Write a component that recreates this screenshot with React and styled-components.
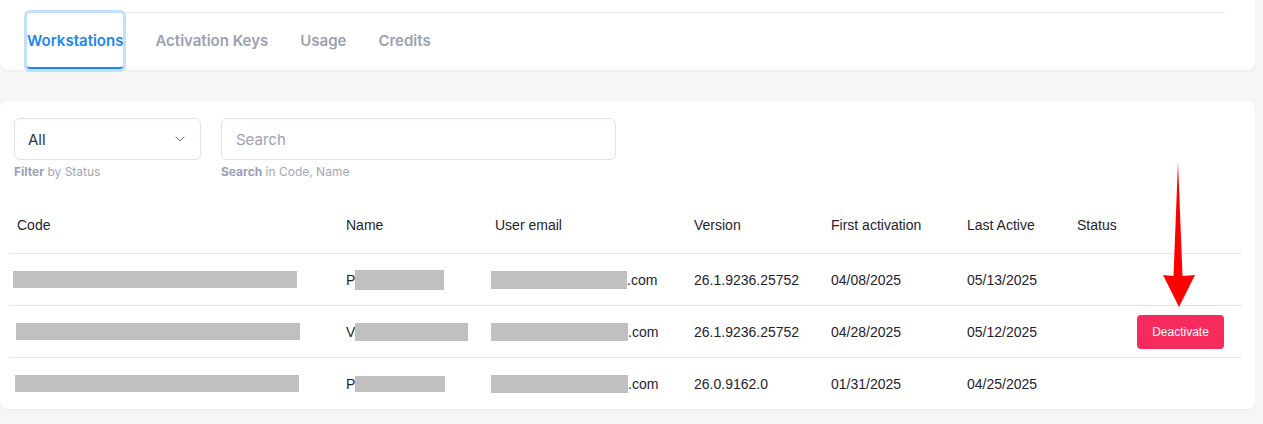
import React from "react";
import styled, { createGlobalStyle } from "styled-components";
import { ChevronDown } from "lucide-react";

const GlobalStyle = createGlobalStyle`
  body {
    margin: 0;
    background: #f6f6f7;
    font-family: Inter, "Liberation Sans", Arial, sans-serif;
  }
`;

const rows = [
  { code: [284, 17, 3], first: "P", name: [89, 20], email: [136, 18], version: "26.1.9236.25752", first_act: "04/08/2025", last: "05/13/2025" },
  { code: [284, 17, 6], first: "V", name: [113, 18], email: [137, 18], version: "26.1.9236.25752", first_act: "04/28/2025", last: "05/12/2025", action: true },
  { code: [284, 17, 5], first: "P", name: [90, 16], email: [137, 18], version: "26.0.9162.0", first_act: "01/31/2025", last: "04/25/2025" },
];

export default function App() {
  return (
    <Page>
      <GlobalStyle />
      <TopCard>
        <Divider />
        <Tabs>
          <Tab $active>Workstations</Tab>
          <Tab>Activation Keys</Tab>
          <Tab>Usage</Tab>
          <Tab>Credits</Tab>
        </Tabs>
      </TopCard>

      <MainCard>
        <Filters>
          <Field>
            <SelectBox $width={187}>
              <span>All</span>
              <ChevronDown size={16} strokeWidth={1.5} color="#6b7280" />
            </SelectBox>
            <Helper>
              <b>Filter</b> by Status
            </Helper>
          </Field>
          <Field>
            <SearchBox $width={395}>Search</SearchBox>
            <Helper>
              <b>Search</b> in Code, Name
            </Helper>
          </Field>
        </Filters>

        <Table>
          <colgroup>
            <col style={{ width: 329 }} />
            <col style={{ width: 149 }} />
            <col style={{ width: 199 }} />
            <col style={{ width: 137 }} />
            <col style={{ width: 136 }} />
            <col style={{ width: 110 }} />
            <col style={{ width: 60 }} />
            <col style={{ width: 112 }} />
          </colgroup>
          <thead>
            <tr>
              <Th>Code</Th>
              <Th>Name</Th>
              <Th>User email</Th>
              <Th>Version</Th>
              <Th>First activation</Th>
              <Th>Last Active</Th>
              <Th>Status</Th>
              <Th />
            </tr>
          </thead>
          <tbody>
            {rows.map((r, i) => (
              <Tr key={i}>
                <Td>
                  <Redact $w={r.code[0]} $h={r.code[1]} $dx={r.code[2] - 7} />
                </Td>
                <Td>
                  {r.first}
                  <Redact $w={r.name[0]} $h={r.name[1]} $dx={0} />
                </Td>
                <Td>
                  <Redact $w={r.email[0]} $h={r.email[1]} $dx={-4} />
                  .com
                </Td>
                <Td>{r.version}</Td>
                <Td>{r.first_act}</Td>
                <Td>{r.last}</Td>
                <Td />
                <Td>{r.action && <DangerButton>Deactivate</DangerButton>}</Td>
              </Tr>
            ))}
          </tbody>
        </Table>
      </MainCard>

      <Arrow width="36" height="150" viewBox="0 0 36 150">
        <path d="M18 2 L22.5 116 L35 115 L19 147 L3 115 L13.5 116 Z" fill="#ff0000" />
      </Arrow>
    </Page>
  );
}

const Page = styled.div`
  position: relative;
  width: 1255px;
  padding-bottom: 15px;
`;

const TopCard = styled.div`
  background: #fff;
  height: 70px;
  padding: 12px 30px 0 25px;
  box-sizing: border-box;
  border-radius: 0 0 8px 8px;
  box-shadow: 0 1px 3px rgba(0, 0, 0, 0.05);
`;

const Divider = styled.div`
  height: 1px;
  background: #ececef;
`;

const Tabs = styled.div`
  display: flex;
  gap: 32px;
  padding-left: 2px;
`;

const Tab = styled.div`
  height: 56px;
  padding: 0;
  box-sizing: border-box;
  display: flex;
  align-items: center;
  font-size: 15px;
  font-weight: 600;
  color: ${(p) => (p.$active ? "#1c86f2" : "#9ba1b5")};
  border-bottom: 2.5px solid ${(p) => (p.$active ? "#1c86f2" : "transparent")};
  border-radius: 3px;
  box-shadow: ${(p) => (p.$active ? "0 0 0 3px #c4defd" : "none")};
`;

const MainCard = styled.div`
  margin-top: 31px;
  background: #fff;
  border-radius: 8px;
  padding: 17px 13px 0 10px;
  box-shadow: 0 1px 3px rgba(0, 0, 0, 0.05);
`;

const Filters = styled.div`
  display: flex;
  gap: 20px;
  margin-left: 4px;
`;

const Field = styled.div`
  display: flex;
  flex-direction: column;
  gap: 4px;
`;

const SelectBox = styled.div`
  width: ${(p) => p.$width}px;
  height: 42px;
  box-sizing: border-box;
  border: 1px solid #e1e3ea;
  border-radius: 6px;
  display: flex;
  align-items: center;
  justify-content: space-between;
  padding: 0 12px 0 13px;
  font-size: 15px;
  color: #2f3542;
`;

const SearchBox = styled.div`
  width: ${(p) => p.$width}px;
  height: 42px;
  box-sizing: border-box;
  border: 1px solid #e1e3ea;
  border-radius: 6px;
  display: flex;
  align-items: center;
  padding: 0 14px;
  font-size: 15px;
  color: #9ca1b3;
`;

const Helper = styled.div`
  font-size: 12px;
  color: #a2a7b8;
  line-height: 15px;

  b {
    font-weight: 700;
    color: #9aa0b3;
  }
`;

const Table = styled.table`
  margin-top: 18px;
  width: 1232px;
  table-layout: fixed;
  border-collapse: collapse;
  font-family: "Liberation Sans", Arial, sans-serif;
  font-size: 14px;
  color: #1f2330;
`;

const Th = styled.th`
  height: 56px;
  padding: 0 0 0 7px;
  text-align: left;
  font-weight: 400;
  border-bottom: 1px solid #e4e4e6;
`;

const Tr = styled.tr`
  &:not(:last-child) td {
    border-bottom: 1px solid #e4e4e6;
  }
`;

const Td = styled.td`
  height: 51px;
  padding: 0 0 0 7px;
  white-space: nowrap;
  overflow: visible;
  line-height: 16px;
`;

const Redact = styled.span`
  display: inline-block;
  vertical-align: ${(p) => -Math.round((p.$h - 10) / 2)}px;
  width: ${(p) => p.$w}px;
  height: ${(p) => p.$h}px;
  margin-left: ${(p) => p.$dx}px;
  background: #c0c0c0;
`;

const DangerButton = styled.button`
  width: 87px;
  height: 34px;
  border: none;
  border-radius: 4px;
  background: #f72a5d;
  color: #fff;
  font-family: "Liberation Sans", Arial, sans-serif;
  font-size: 12px;
  font-weight: 400;
  cursor: pointer;
`;

const Arrow = styled.svg`
  position: absolute;
  left: 1160px;
  top: 160px;
`;
